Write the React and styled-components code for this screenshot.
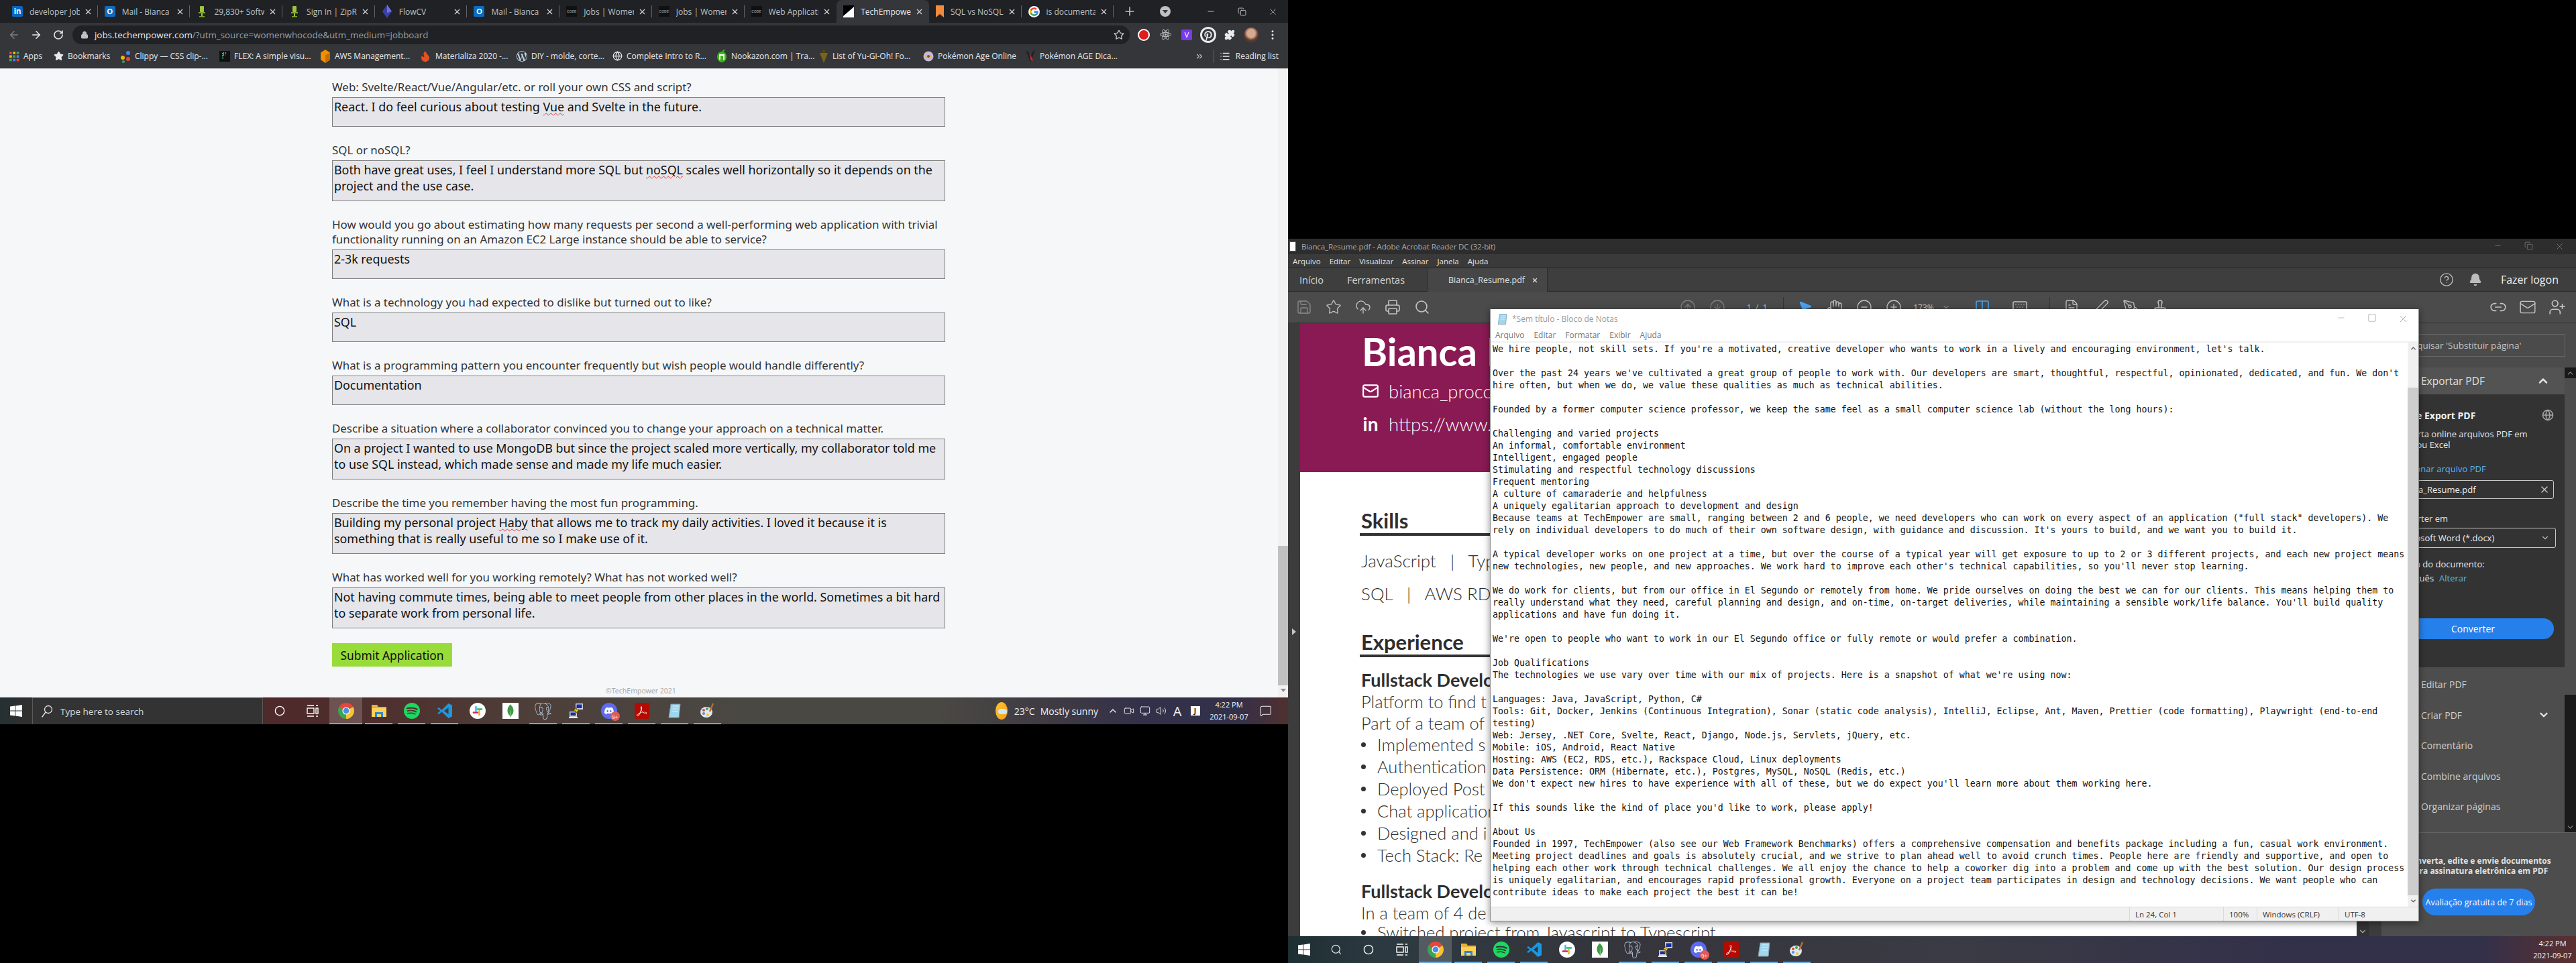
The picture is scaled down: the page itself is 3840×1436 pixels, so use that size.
import React from "react";
import styled, { createGlobalStyle } from "styled-components";
import {
  ArrowLeft, ArrowRight, RotateCw, Lock, Star, Plus, Minus, Square, X, Copy, Puzzle, EllipsisVertical,
  ChevronDown, ChevronUp, ChevronsRight, List, Save, CloudUpload, Printer, Search, CircleArrowUp, CircleArrowDown,
  MousePointer2, Hand, CircleMinus, CirclePlus, Columns2, Keyboard, FileText, PenLine, PenTool, Stamp,
  CircleHelp, Bell, Link2, Mail, UserPlus, Globe, Video, Monitor, Volume2, MessageSquare, Circle, Flame,
} from "lucide-react";
import { SiSpotify, SiMongodb, SiPostgresql, SiDiscord, SiAdobeacrobatreader, SiPinterest, SiReact, SiWordpress } from "react-icons/si";

const UI = `"Open Sans", "Noto Sans", sans-serif`;

const Global = createGlobalStyle`
  html, body { margin: 0; padding: 0; background: #000; overflow: hidden; }
  * { box-sizing: border-box; }
`;

const Desktop = styled.div`
  width: 3840px; height: 1436px; background: #000; display: flex; font-family: ${UI};
`;
const Screen = styled.div`
  position: relative; width: 1920px; height: 1080px; display: flex; flex-direction: column; overflow: hidden;
  align-self: ${(p) => (p.$bottom ? "flex-end" : "flex-start")};
`;

/* ---------- Chrome ---------- */
const TabStrip = styled.div`
  height: 34px; background: #202124; display: flex; align-items: stretch; padding-left: 8px; flex: none;
`;
const Tab = styled.div`
  position: relative; width: 137.7px; display: flex; align-items: center; padding: 0 8px 0 10px; flex: none;
  background: ${(p) => (p.$active ? "#35363a" : "transparent")};
  border-radius: 8px 8px 0 0;
  color: ${(p) => (p.$active ? "#e8eaed" : "#bdc1c6")};
  ${(p) => p.$sep && `&::after { content: ""; position: absolute; right: 0; top: 8px; height: 18px; width: 1px; background: #5f6368; }`}
`;
const TabTitle = styled.span`
  flex: 1; margin-left: 10px; font-size: 12px; white-space: nowrap; overflow: hidden; min-width: 0;
`;
const TabClose = styled.span`
  display: flex; margin-left: 6px; color: #dadce0;
`;
const NewTab = styled.div`
  display: flex; align-items: center; margin-left: 14px; color: #bdc1c6;
`;
const Fill = styled.div`flex: 1;`;
const StripEnd = styled.div`
  display: flex; align-items: center; color: #dadce0;
`;
const Profile = styled.div`
  width: 16px; height: 16px; border-radius: 50%; background: #bdc1c6; margin-right: 37px; position: relative;
  &::after { content: ""; position: absolute; left: 4px; top: 6px; border: 4px solid transparent; border-top: 5px solid #35363a; border-bottom: 0; }
`;
const WinBtn = styled.div`
  width: 46px; display: flex; justify-content: center; color: ${(p) => p.$c || "#dadce0"};
`;
const Toolbar = styled.div`
  height: 35px; background: #35363a; display: flex; align-items: center; padding-left: 4px; flex: none;
`;
const NavBtn = styled.div`
  width: 33px; display: flex; justify-content: center; color: ${(p) => (p.$off ? "#7d7f83" : "#e8eaed")};
`;
const Omnibox = styled.div`
  margin-left: 5px; width: 1576px; height: 28px; border-radius: 14px; background: #202124;
  display: flex; align-items: center; padding: 0 8px 0 12px; font-size: 13.35px; color: #9aa0a6; white-space: nowrap; flex: none;
`;
const Host = styled.span`color: #e8eaed;`;
const UrlText = styled.span`margin-left: 9px;`;
const OmniStar = styled.div`margin-left: auto; display: flex; color: #c4c7ca;`;
const Exts = styled.div`display: flex; align-items: center; padding-left: 5px;`;
const Ext = styled.div`width: 32px; display: flex; justify-content: center; align-items: center; color: ${(p) => p.$c || "#e8eaed"};`;
const Stop = styled.span`
  width: 18px; height: 18px; border-radius: 50%; background: #e21c1c; border: 2px solid #fff; display: block;
`;
const VueBox = styled.span`
  width: 16px; height: 16px; background: #7c3aed; border-radius: 2px; color: #fff; font-size: 11px; display: flex; align-items: center; justify-content: center;
`;
const PinRing = styled.span`
  width: 24px; height: 24px; border-radius: 50%; background: #e8eaed; display: flex; align-items: center; justify-content: center; color: #35363a;
`;
const Avatar = styled.span`
  width: 22px; height: 22px; border-radius: 50%; background: radial-gradient(circle at 50% 40%, #d7a98f 0 34%, #5a3a2c 60%); display: block;
`;
const Bookmarks = styled.div`
  height: 33px; padding-bottom: 3px; background: #35363a; border-bottom: 1px solid #202124; display: flex; align-items: center; padding-left: 13px; flex: none;
`;
const Mark = styled.div`
  width: ${(p) => p.$w}px; display: flex; align-items: center; gap: 6px; font-size: 12px; color: #e8eaed; white-space: nowrap; flex: none; overflow: hidden;
`;
const MarkEnd = styled.div`
  margin-left: auto; display: flex; align-items: center; gap: 8px; padding-right: 14px; font-size: 12px; color: #e8eaed;
`;
const MarkSep = styled.span`width: 1px; height: 20px; background: #5f6368;`;
const MarkMore = styled.span`display: flex; color: #c4c7ca; margin-right: 6px;`;

/* ---------- Form page ---------- */
const PageArea = styled.div`
  flex: 1; display: flex; background: #f6f7f9; min-height: 0;
`;
const FormPane = styled.div`
  flex: 1; position: relative; padding: 17px 0 0 495px; min-width: 0;
`;
const Field = styled.div`
  width: 914px; margin-bottom: 24px; font-family: "Noto Sans", sans-serif;
`;
const Question = styled.div`
  font-size: 16.9px; line-height: 22px; color: #333; margin-bottom: 4px; white-space: nowrap;
`;
const Answer = styled.div`
  height: ${(p) => p.$h}px; background: #e6e6ea; border: 1px solid #7f7f7f; padding: 2px 2px; font-size: 17.85px; line-height: 23.5px; color: #111; white-space: nowrap;
`;
const Typo = styled.span`
  text-decoration: underline wavy #e0302a 1px; text-underline-offset: 2px;
`;
const SubmitBtn = styled.div`
  width: 179px; height: 35px; margin-top: -2px; background: #98dc3a; display: flex; align-items: center; justify-content: center;
  font-family: "Noto Sans", sans-serif; font-size: 17.4px; color: #111;
`;
const Copyright = styled.div`
  position: absolute; left: 903px; top: 921px; font-size: 10.5px; color: #a9a9a9; font-family: "Noto Sans", sans-serif; white-space: nowrap;
`;
const PageScroll = styled.div`
  width: 15px; background: #f1f1f1; display: flex; flex-direction: column; padding-top: 712px;
`;
const PageThumb = styled.div`
  height: 208px; background: #c1c1c1;
`;
const ArrowDownGlyph = styled.div`
  margin: 5px auto 0; border: 4px solid transparent; border-top: 5px solid #8b8b8b; border-bottom: 0; width: 0;
`;

/* ---------- Taskbar ---------- */
const Taskbar = styled.div`
  height: 40px; flex: none; display: flex; align-items: stretch; position: relative; color: #fff;
  background: ${(p) =>
    p.$right
      ? "linear-gradient(90deg,#1d2f33 0,#2c3940 130px,#36353c 500px,#3a3b44 1000px,#33304a 1500px,#33304a 1780px,#5a3030 1920px)"
      : "linear-gradient(90deg,#253032 0,#31302e 48px,#4e2a2a 400px,#4e2d2b 520px,#4d3f3a 800px,#4a4843 1100px,#4a4843 1400px,#3d3844 1600px,#33304a 1700px,#33304a 1840px,#503030 1920px)"};
`;
const StartBtn = styled.div`
  width: 48px; display: flex; align-items: center; justify-content: center; flex: none;
`;
const SearchBox = styled.div`
  width: 344px; flex: none; background: #333; border: 1px solid #5a5a5a; border-bottom: 0; display: flex; align-items: center; gap: 11px; padding-left: 12px;
  font-size: 13.5px; color: #d8d8d8;
`;
const Tile = styled.div`
  width: ${(p) => p.$w || 49}px; flex: none; position: relative; display: flex; align-items: center; justify-content: center;
  background: ${(p) => (p.$active ? "rgba(255,255,255,.18)" : "transparent")};
  ${(p) => p.$open && `&::after { content: ""; position: absolute; bottom: 0; left: ${p.$active ? 0 : 4}px; right: ${p.$active ? 0 : 4}px; height: 2px; background: #67abe0; }`}
`;
const Tray = styled.div`
  margin-left: auto; display: flex; align-items: center; color: #f0f0f0; font-size: 14px; padding-right: ${(p) => p.$pr}px;
`;
const Weather = styled.div`display: flex; align-items: center; gap: 8px; margin-right: 10px;`;
const Sunny = styled.span`
  width: 18px; height: 26px; border-radius: 50%; background: linear-gradient(120deg,#ffc72e,#f59d14); position: relative; display: block; margin-right: 2px;
  &::after { content: ""; position: absolute; left: 4px; top: 10px; width: 13px; height: 8px; border-radius: 4px; background: #cfe6f5; }
`;
const TrayIcon = styled.div`width: 24px; display: flex; justify-content: center; align-items: center; font-size: 20px;`;
const JBox = styled.span`
  width: 14px; height: 14px; background: #fff; color: #111; font-size: 10px; font-weight: 700; display: flex; align-items: center; justify-content: center; margin-left: 5px;
`;
const Clock = styled.div`
  width: 62px; margin-left: ${(p) => p.$ml || 0}px; text-align: center; font-size: 11px; line-height: 18px; color: #f4f4f4; white-space: nowrap;
`;
const Notify = styled.div`width: 48px; display: flex; justify-content: center; align-items: center;`;

/* ---------- Acrobat ---------- */
const Acrobat = styled.div`flex: 1; display: flex; flex-direction: column; min-height: 0; background: #4a4a4a; color: #ddd;`;
const AcTitle = styled.div`
  height: 23px; background: #2d2d2d; display: flex; align-items: center; padding-left: 2px; font-size: 11.6px; letter-spacing: -0.15px; color: #a8a8a8; flex: none;
`;
const PdfBadge = styled.span`
  width: 10px; height: 15px; background: #fff; border: 1px solid #d61f1f; color: #d61f1f; display: block; margin-right: 8px; margin-left: 0;
`;
const AcWin = styled.div`margin-left: auto; display: flex; color: #888; padding-right: 2px;`;
const AcMenu = styled.div`
  height: 21px; background: #3a3a3a; border-bottom: 1px solid #222; display: flex; align-items: center; gap: 13px; padding-left: 7px; font-size: 11.5px; color: #e2e2e2; flex: none;
`;
const AcTabs = styled.div`
  height: 35px; background: #3e3e3e; border-bottom: 1px solid #2b2b2b; display: flex; align-items: stretch; flex: none;
`;
const AcNav = styled.div`
  width: 207px; display: flex; align-items: center; gap: 35px; padding-left: 17px; font-size: 14.5px; color: #d6d6d6;
`;
const AcDocTab = styled.div`
  width: 180px; background: #464646; border-left: 1px solid #2b2b2b; border-right: 1px solid #2b2b2b; display: flex; align-items: center; padding-left: 31px; font-size: 12.5px; color: #e0e0e0; gap: 10px;
  margin-bottom: -1px; white-space: nowrap;
`;
const AcRight = styled.div`
  margin-left: auto; display: flex; align-items: center; gap: 22px; padding-right: 26px; color: #bcbcbc; font-size: 16px;
`;
const Logon = styled.span`color: #f0f0f0; margin-left: 6px;`;
const AcTools = styled.div`
  height: 47px; background: #4b4b4b; border-bottom: 1px solid #333; display: flex; align-items: center; padding-left: 2px; padding-right: 6px; flex: none;
`;
const Tool = styled.div`
  width: ${(p) => p.$w || 44}px; display: flex; justify-content: center; align-items: center; color: ${(p) => p.$c || "#c4c4c4"}; flex: none; font-size: 12px;
  margin-left: ${(p) => p.$ml || 0}px;
`;
const ToolSep = styled.span`width: 1px; height: 30px; background: #333; margin: 0 10px;`;
const AcBody = styled.div`flex: 1; display: flex; min-height: 0;`;
const Rail = styled.div`
  width: 18px; background: #3c3c3c; display: flex; align-items: center; justify-content: center; flex: none;
  &::after { content: ""; border: 5px solid transparent; border-left: 6px solid #c4c4c4; border-right: 0; position: relative; top: 3px; }
`;
const PdfPage = styled.div`
  flex: 1; min-width: 0; background: #fff; overflow: hidden; color: #2e2e2e; font-family: Lato, "Open Sans", sans-serif;
`;
const PdfHead = styled.div`
  height: 222px; background: #8a1a53; color: #fff; padding: 8px 0 0 92px;
`;
const PdfName = styled.div`font-size: 58px; line-height: 68px; font-weight: 700; white-space: nowrap;`;
const PdfLink = styled.div`
  margin-top: ${(p) => p.$mt}px; height: 34px; display: flex; align-items: center; gap: 14px; font-size: 27.5px; font-weight: 300; white-space: nowrap;
`;
const PdfLinkIcon = styled.span`width: 26px; display: flex; justify-content: center; font-weight: 700; font-size: 28px;`;
const PdfBody = styled.div`padding: 53px 0 0 89px;`;
const SectionTitle = styled.div`
  font-size: 31px; line-height: 38px; font-weight: 700; border-bottom: 4px solid #333; padding-left: 2px; margin-top: ${(p) => p.$mt || 0}px; white-space: nowrap;
`;
const SkillLine = styled.div`
  font-size: 26px; line-height: 32px; font-weight: 300; padding-left: 2px; margin-top: ${(p) => p.$mt}px; white-space: pre;
`;
const JobTitle = styled.div`
  font-size: 27px; line-height: 32px; font-weight: 700; padding-left: 2px; margin-top: ${(p) => p.$mt}px; white-space: nowrap;
`;
const JobLine = styled.div`
  font-size: 25.5px; line-height: 32px; font-weight: 300; padding-left: 2px; white-space: nowrap;
`;
const Bullet = styled.div`
  font-size: 25.5px; line-height: 33px; font-weight: 300; padding-left: 26px; position: relative; white-space: nowrap; margin-top: ${(p) => p.$mt || 0}px;
  &::before { content: ""; position: absolute; left: 2px; top: 13px; width: 7px; height: 7px; border-radius: 50%; background: #333; }
`;
const DocScroll = styled.div`
  width: 18px; background: #333; flex: none; display: flex; align-items: flex-end; justify-content: center; color: #aaa;
`;
const DocGap = styled.div`width: 19px; background: #3c3c3c; flex: none;`;
const Panel = styled.div`width: 290px; flex: none; display: flex; flex-direction: column; background: #4b4b4b;`;
const PanelSearch = styled.div`height: 66px; padding: 16px 16px 0; flex: none;`;
const SearchField = styled.div`
  height: 34px; border: 1px solid #666; padding-left: 14px; display: flex; align-items: center; font-size: 13.5px; color: #c4c4c4; white-space: nowrap;
`;
const PanelMain = styled.div`height: 693px; display: flex; flex: none;`;
const PanelCol = styled.div`flex: 1; min-width: 0; display: flex; flex-direction: column;`;
const ExportHead = styled.div`
  height: 40px; background: #535353; padding: 0 22px 0 59px; display: flex; align-items: center; justify-content: space-between; font-size: 15.5px; color: #e0e0e0; flex: none;
`;
const ExportBody = styled.div`
  height: 407px; background: #333; padding: 20px 16px 0; flex: none; font-size: 13px; color: #e8e8e8;
`;
const ExportTitle = styled.div`
  height: 22px; display: flex; align-items: center; justify-content: space-between; font-weight: 700; font-size: 14px; color: #f0f0f0;
`;
const PLine = styled.div`
  line-height: 16px; margin-top: ${(p) => p.$mt || 0}px; color: ${(p) => p.$c || "inherit"}; white-space: nowrap; display: flex; gap: ${(p) => p.$gap || 0}px;
`;
const Blue = styled.span`color: #5ab4f0;`;
const InputBox = styled.div`
  height: ${(p) => p.$h}px; margin-top: ${(p) => p.$mt}px; margin-right: ${(p) => p.$mr || 0}px; border: 1px solid #c8c8c8; border-radius: 3px; display: flex; align-items: center; justify-content: space-between;
  padding: 0 ${(p) => p.$pr}px 0 ${(p) => p.$pl}px; white-space: nowrap; color: #ededed;
`;
const ConvertBtn = styled.div`
  height: 31px; margin-top: 52px; border-radius: 16px; background: #2680eb; color: #fff; font-size: 14px; display: flex; align-items: center; justify-content: center;
`;
const ToolList = styled.div`flex: 1; background: #4d4d4d; padding-top: 3px;`;
const ToolItem = styled.div`
  height: 45.5px; padding: 0 22px 0 59px; display: flex; align-items: center; justify-content: space-between; font-size: 14px; color: #cfcfcf;
`;
const PanelBar = styled.div`width: 17px; background: #1a1a1a; flex: none; display: flex; flex-direction: column;`;
const BarArrow = styled.div`height: 16px; display: flex; justify-content: center; align-items: center; color: #8a8a8a; flex: none;`;
const BarThumb = styled.div`height: 472px; background: #4d4d4d; flex: none;`;
const PanelFoot = styled.div`
  flex: 1; border-top: 1px solid #646464; background: #4d4d4d; padding-top: 34px; text-align: center; font-size: 12px; font-weight: 700; line-height: 15px; color: #e0e0e0;
`;
const TrialBtn = styled.div`
  width: 168px; height: 40px; margin: 19px auto 0; border-radius: 20px; background: #2680eb; color: #fff; font-size: 12.5px; font-weight: 400; display: flex; align-items: center; justify-content: center; white-space: nowrap;
`;

/* ---------- Notepad ---------- */
const Notepad = styled.div`
  position: absolute; left: 301px; top: 105px; width: 1385px; height: 913px; background: #fff; border: 1px solid #8a8a8a; border-top: 0;
  box-shadow: 0 2px 10px rgba(0,0,0,.45); display: flex; flex-direction: column; font-family: ${UI};
`;
const NpTitle = styled.div`
  height: 29px; display: flex; align-items: center; padding-left: 9px; font-size: 12px; color: #9a9a9a; flex: none; gap: 5px;
`;
const NpWin = styled.div`margin-left: auto; display: flex; color: #8d8d8d;`;
const NpMenu = styled.div`
  height: 18px; display: flex; align-items: center; gap: 14px; padding-left: 7px; font-size: 12px; color: #777; flex: none;
`;
const NpEditWrap = styled.div`
  flex: 1; min-height: 0; display: flex; border-top: 2px solid #f0f0f0; margin-top: 1px;
`;
const NpEdit = styled.div`
  flex: 1; min-width: 0; padding: 1px 0 0 3px; overflow: hidden; white-space: pre; font-family: "DejaVu Sans Mono", "Liberation Mono", monospace; font-size: 13.29px; line-height: 18px; color: #111;
`;
const NpBar = styled.div`width: 16px; background: #f0f0f0; flex: none; display: flex; flex-direction: column;`;
const NpArrow = styled.div`height: 17px; display: flex; justify-content: center; align-items: center; color: #505050; flex: none;`;
const NpThumbSpace = styled.div`height: 50px; flex: none;`;
const NpThumb = styled.div`flex: 1; background: #cdcdcd;`;
const NpStatus = styled.div`
  height: 21px; background: #f0f0f0; border-top: 1px solid #d9d9d9; display: flex; justify-content: flex-end; font-size: 11.5px; color: #333; flex: none;
`;
const NpCell = styled.div`
  width: ${(p) => p.$w}px; border-left: 1px solid #d9d9d9; padding-left: 8px; display: flex; align-items: center; white-space: nowrap;
`;

/* ---------- icons ---------- */
const Fav = styled.span`
  width: 16px; height: 16px; flex: none; display: flex; align-items: center; justify-content: center; overflow: hidden;
  font-family: "Liberation Sans", sans-serif; font-weight: 700;
  background: ${(p) => p.$bg || "transparent"}; color: ${(p) => p.$c || "#fff"}; font-size: ${(p) => p.$s || 11}px; border-radius: ${(p) => p.$r || 0}px;
`;
const TileBadge = styled(Fav)`
  width: ${(p) => p.$sz || 24}px; height: 24px;
`;
const Zip = () => (
  <svg width="16" height="18" viewBox="0 0 16 18"><rect x="5" y="1" width="6" height="9" rx="1" fill="#9bc53d" /><rect x="3" y="10" width="10" height="2" fill="#7ea52c" /><rect x="7" y="12" width="2" height="4" fill="#9bc53d" /><rect x="4" y="16" width="8" height="1.5" fill="#7ea52c" /></svg>
);
const Flow = () => (
  <svg width="16" height="20" viewBox="0 0 16 20"><path d="M8 0 15 10 8 20 1 10Z" fill="#3b3fa8" /><path d="M8 0 15 10 8 12Z" fill="#6d72d8" /></svg>
);
const TE = () => (
  <svg width="16" height="18" viewBox="0 0 16 18"><rect width="16" height="18" fill="#fff" /><path d="M0 16 16 2V0H0Z" fill="#000" /></svg>
);
const BookMark = () => (
  <svg width="12" height="18" viewBox="0 0 12 18"><path d="M0 0H12V18L6 13 0 18Z" fill="#f08a3c" /></svg>
);
const G = () => (
  <svg width="17" height="17" viewBox="0 0 24 24"><circle cx="12" cy="12" r="12" fill="#fff" /><path d="M21 12.3c0-.7-.1-1.300-.2-1.900H12v3.600h5c-.2 1.200-.9 2.100-1.900 2.800v2.300h3c1.800-1.600 2.900-4 2.900-6.800z" fill="#4285F4" /><path d="M12 21c2.500 0 4.500-.8 6.100-2.200l-3-2.300c-.8.600-1.900.9-3.100.9-2.400 0-4.400-1.600-5.100-3.800H3.800v2.400C5.300 19 8.400 21 12 21z" fill="#34A853" /><path d="M6.900 13.600c-.4-1.100-.4-2.200 0-3.300V8H3.800c-1.100 2.300-1.100 5.500 0 8z" fill="#FBBC05" /><path d="M12 6.600c1.300 0 2.500.5 3.500 1.400l2.600-2.600C16.500 3.900 14.400 3 12 3 8.400 3 5.300 5 3.800 8l3.100 2.400C7.600 8.200 9.600 6.600 12 6.600z" fill="#EA4335" /></svg>
);
const favicon = (k) => {
  switch (k) {
    case "in": return <Fav $bg="#0a66c2" $r={2} $s={12}>in</Fav>;
    case "ol": return <Fav $bg="#0f6cbd" $r={2} $s={11}>O</Fav>;
    case "zip": return <Zip />;
    case "flow": return <Flow />;
    case "code": return <Fav $c="#8a8a8a" $bg="#111" $s={5}>CODE</Fav>;
    case "te": return <TE />;
    case "sql": return <BookMark />;
    default: return <G />;
  }
};
const AppsGrid = () => (
  <svg width="16" height="16" viewBox="0 0 15 15">
    {[0, 1, 2].flatMap((r) => [0, 1, 2].map((c) => (
      <rect key={r + "" + c} x={1 + c * 5} y={1 + r * 5} width="3.400" height="3.400" fill={["#ea4335", "#fbbc05", "#34a853", "#4285f4"][(r + c) % 4]} />
    )))}
  </svg>
);
const Clippy = () => (
  <svg width="16" height="22" viewBox="0 0 16 22"><circle cx="4" cy="13" r="3" fill="#f4b400" /><circle cx="12" cy="6" r="3" fill="#4285f4" /><circle cx="12" cy="15" r="3" fill="#ea4335" /><circle cx="5" cy="19" r="2" fill="#34a853" /></svg>
);
const FlexIco = () => (
  <svg width="16" height="16" viewBox="0 0 16 16"><rect width="16" height="16" fill="#111" /><path d="M5 3h6M5 6h4M5 3v9" stroke="#3fe0a8" strokeWidth="1.500" strokeDasharray="2 1.200" /></svg>
);
const Aws = () => (
  <svg width="16" height="20" viewBox="0 0 16 20"><path d="M8 0 15 4.500V15L8 20 1 15V4.500Z" fill="#f29100" /><path d="M8 8 15 4.500V15L8 20Z" fill="#c46f00" /></svg>
);
const Drop = () => <Flame size={18} color="#e8501f" fill="#e8501f" />;
const GlobeWhite = () => <Globe size={15} color="#e8eaed" />;
const Nook = () => (
  <svg width="16" height="20" viewBox="0 0 16 20"><path d="M8 3c5 0 7 4 7 8s-3 8-7 8-7-4-7-8 2-8 7-8z" fill="#3cb21a" /><path d="M5 15V8l6 0v7" stroke="#fff" strokeWidth="1.800" fill="none" /><path d="M9 3l3-3" stroke="#3cb21a" strokeWidth="2" /></svg>
);
const Yugi = () => (
  <svg width="14" height="20" viewBox="0 0 14 20"><path d="M1 5h12L7 20Z" fill="#7a6318" /><path d="M5 0h4v5H5Z" fill="#54440f" /></svg>
);
const Poke = () => (
  <svg width="16" height="18" viewBox="0 0 16 18"><circle cx="8" cy="9" r="7.500" fill="#c9b7d8" /><path d="M3 7h10v4H3z" fill="#e3c22c" /><circle cx="8" cy="9" r="2" fill="#7c4d27" /></svg>
);
const PokeV = () => (
  <svg width="16" height="20" viewBox="0 0 16 20"><path d="M1 1l7 18 7-18-4 2-3 9-3-9z" fill="#222" /><path d="M8 7l4 10-4-2z" fill="#d62a2a" /></svg>
);
const Win = ({ s = 18 }) => (
  <svg width={s} height={s} viewBox="0 0 18 18" fill="#fff"><path d="M0 2.600 7.400 1.500V8.500H0ZM8.300 1.400 18 0V8.500H8.300ZM0 9.400H7.400V16.500L0 15.400ZM8.300 9.400H18V18L8.300 16.600Z" /></svg>
);
const ChromeIco = () => (
  <svg width="24" height="24" viewBox="0 0 24 24"><path d="M12 12 22.390 6A12 12 0 0 0 1.610 6Z" fill="#e2483b" /><path d="M12 12 12 24A12 12 0 0 0 22.390 6Z" fill="#f6c436" /><path d="M12 12 1.610 6A12 12 0 0 0 12 24Z" fill="#3da453" /><circle cx="12" cy="12" r="5.600" fill="#fff" /><circle cx="12" cy="12" r="4.400" fill="#4a8fe7" /></svg>
);
const FolderIco = () => (
  <svg width="24" height="24" viewBox="0 0 24 24"><path d="M1 3h8l2 3h12v15H1Z" fill="#e8b23a" /><rect x="1" y="8" width="22" height="13" fill="#fbd35a" /><rect x="6" y="14" width="12" height="7" fill="#2f86d6" /><rect x="9" y="17" width="6" height="4" fill="#fbd35a" /></svg>
);
const VscIco = () => (
  <svg width="24" height="24" viewBox="0 0 24 24"><path fillRule="evenodd" d="M17.500 1 7.500 10.500 3 7 1 8.500 5.500 12 1 15.500 3 17 7.500 13.500 17.500 23 23 20.500V3.500ZM17.500 7V17L11 12Z" fill="#1d97e0" /></svg>
);
const SlackIco = () => (
  <svg width="24" height="24" viewBox="0 0 24 24"><circle cx="12" cy="12" r="12" fill="#fff" /><g strokeWidth="2.600" strokeLinecap="round"><path d="M9.500 6v6" stroke="#36c5f0" /><path d="M6 14.500h6" stroke="#e01e5a" /><path d="M14.500 18v-6" stroke="#ecb22e" /><path d="M18 9.500h-6" stroke="#2eb67d" /></g></svg>
);
const MongoIco = () => (
  <TileBadge $bg="#fff"><SiMongodb size={20} color="#3a9a3e" /></TileBadge>
);
const PuttyIco = () => (
  <svg width="24" height="24" viewBox="0 0 24 24"><rect x="11" y="1" width="11" height="9" fill="#cfd3dc" /><rect x="12.500" y="2.500" width="8" height="5.500" fill="#1a2ca5" /><rect x="2" y="13" width="11" height="8" fill="#cfd3dc" /><rect x="3.500" y="14.500" width="8" height="4.500" fill="#1a2ca5" /><rect x="1" y="21" width="13" height="2" fill="#ececec" /><path d="M14 5 8 12h4l-3 7 7-9h-4z" fill="#ffd61f" stroke="#222" strokeWidth=".6" /></svg>
);
const DiscordWrap = styled.span`position: relative; display: flex;`;
const DiscordIco = () => (
  <TileBadge $bg="#5c6bf2" $r={12}><SiDiscord size={14} color="#fff" /></TileBadge>
);
const DiscordBadge = styled.span`
  position: absolute; left: 50%; top: 50%; margin-left: 2px; margin-top: 1px; width: 14px; height: 14px; border-radius: 50%; background: #e35b58; color: #fff; font-size: 8px; display: flex; align-items: center; justify-content: center;
`;
const AcrobatIco = () => (
  <TileBadge $bg="#b30b00" $r={3} $sz={22}><SiAdobeacrobatreader size={15} color="#fff" /></TileBadge>
);
const NotepadIco = ({ s = 24 }) => (
  <svg width={s} height={s} viewBox="0 0 24 24"><path d="M6 2 20 2 18 22 3 22Z" fill="#9ed6ee" stroke="#7f99a8" /><path d="M9 5 18 5M8.500 9 17.500 9M8 13 17 13" stroke="#d9f1fb" /></svg>
);
const PaintIco = () => (
  <svg width="24" height="24" viewBox="0 0 24 24"><ellipse cx="10" cy="14" rx="9" ry="8" fill="#dfe7ef" /><circle cx="6" cy="11" r="2" fill="#e2483b" /><circle cx="11" cy="9" r="2" fill="#3da453" /><circle cx="6" cy="16" r="2" fill="#4a8fe7" /><circle cx="12" cy="18" r="2" fill="#f6c436" /><path d="M20 1 15 13" stroke="#b3702f" strokeWidth="2.500" /></svg>
);
const SearchGlass = () => (
  <svg width="18" height="20" viewBox="0 0 18 20" fill="none" stroke="#e8e8e8" strokeWidth="1.300"><circle cx="11" cy="7" r="5.500" /><path d="M7 11 1.500 18.500" /></svg>
);
const TaskView = () => (
  <svg width="18" height="18" viewBox="0 0 18 18" fill="none" stroke="#fff" strokeWidth="1.400"><rect x="1" y="5" width="10" height="8" /><path d="M1 1h10M1 17h10M14 1h3M14 17h3" /><rect x="14" y="5" width="3" height="8" /></svg>
);

/* ---------- data ---------- */
const tabs = [
  ["in", "developer Jobs", 1], ["ol", "Mail - Bianca P", 1], ["zip", "29,830+ Softw", 1], ["zip", "Sign In | ZipRe", 1],
  ["flow", "FlowCV", 1], ["ol", "Mail - Bianca P", 1], ["code", "Jobs | Women", 1], ["code", "Jobs | Women", 1],
  ["code", "Web Applicati", 0], ["te", "TechEmpower", 0, true], ["sql", "SQL vs NoSQL", 1], ["g", "is documentat", 1],
];
const marks = [
  [<AppsGrid />, "Apps", 67], [<Star size={15} fill="#e8eaed" color="#e8eaed" />, "Bookmarks", 99], [<Clippy />, "Clippy — CSS clip-...", 148],
  [<FlexIco />, "FLEX: A simple visu...", 150], [<Aws />, "AWS Management...", 148], [<Drop />, "Materializa 2020 -...", 145],
  [<SiWordpress size={16} color="#bcd5e6" />, "DIY - molde, corte...", 143], [<GlobeWhite />, "Complete Intro to R...", 155], [<Nook />, "Nookazon.com | Tra...", 153],
  [<Yugi />, "List of Yu-Gi-Oh! Fo...", 155], [<Poke />, "Pokémon Age Online", 152], [<PokeV />, "Pokémon AGE Dica...", 150],
];
const fields = [
  { q: ["Web: Svelte/React/Vue/Angular/etc. or roll your own CSS and script?"], h: 44, a: <>React. I do feel curious about testing <Typo>Vue</Typo> and Svelte in the future.</> },
  { q: ["SQL or noSQL?"], h: 61, a: <>Both have great uses, I feel I understand more SQL but <Typo>noSQL</Typo> scales well horizontally so it depends on the<br />project and the use case.</> },
  { q: ["How would you go about estimating how many requests per second a well-performing web application with trivial", "functionality running on an Amazon EC2 Large instance should be able to service?"], h: 44, a: "2-3k requests" },
  { q: ["What is a technology you had expected to dislike but turned out to like?"], h: 44, a: "SQL" },
  { q: ["What is a programming pattern you encounter frequently but wish people would handle differently?"], h: 44, a: "Documentation" },
  { q: ["Describe a situation where a collaborator convinced you to change your approach on a technical matter."], h: 61, a: <>On a project I wanted to use MongoDB but since the project scaled more vertically, my collaborator told me<br />to use SQL instead, which made sense and made my life much easier.</> },
  { q: ["Describe the time you remember having the most fun programming."], h: 61, a: <>Building my personal project <Typo>Haby</Typo> that allows me to track my daily activities. I loved it because it is<br />something that is really useful to me so I make use of it.</> },
  { q: ["What has worked well for you working remotely? What has not worked well?"], h: 61, a: <>Not having commute times, being able to meet people from other places in the world. Sometimes a bit hard<br />to separate work from personal life.</> },
];
const taskTiles = [
  [<ChromeIco />, true, true], [<FolderIco />, true], [<SiSpotify size={24} color="#1ed760" />, true], [<VscIco />, true], [<SlackIco />], [<MongoIco />],
  [<SiPostgresql size={25} color="#b4c6d8" />, true], [<PuttyIco />, true],
  [<DiscordWrap><DiscordIco /><DiscordBadge>9+</DiscordBadge></DiscordWrap>, true], [<AcrobatIco />, true], [<NotepadIco />, true], [<PaintIco />, true],
];
const noteText = `We hire people, not skill sets. If you're a motivated, creative developer who wants to work in a lively and encouraging environment, let's talk.

Over the past 24 years we've cultivated a great group of people to work with. Our developers are smart, thoughtful, respectful, opinionated, dedicated, and fun. We don't
hire often, but when we do, we value these qualities as much as technical abilities.

Founded by a former computer science professor, we keep the same feel as a small computer science lab (without the long hours):

Challenging and varied projects
An informal, comfortable environment
Intelligent, engaged people
Stimulating and respectful technology discussions
Frequent mentoring
A culture of camaraderie and helpfulness
A uniquely egalitarian approach to development and design
Because teams at TechEmpower are small, ranging between 2 and 6 people, we need developers who can work on every aspect of an application ("full stack" developers). We
rely on individual developers to do much of their own software design, with guidance and discussion. It's yours to build, and we want you to build it.

A typical developer works on one project at a time, but over the course of a typical year will get exposure to up to 2 or 3 different projects, and each new project means
new technologies, new people, and new approaches. We work hard to improve each other's technical capabilities, so you'll never stop learning.

We do work for clients, but from our office in El Segundo or remotely from home. We pride ourselves on doing the best we can for our clients. This means helping them to
really understand what they need, careful planning and design, and on-time, on-target deliveries, while maintaining a sensible work/life balance. You'll build quality
applications and have fun doing it.

We're open to people who want to work in our El Segundo office or fully remote or would prefer a combination.

Job Qualifications
The technologies we use vary over time with our mix of projects. Here is a snapshot of what we're using now:

Languages: Java, JavaScript, Python, C#
Tools: Git, Docker, Jenkins (Continuous Integration), Sonar (static code analysis), IntelliJ, Eclipse, Ant, Maven, Prettier (code formatting), Playwright (end-to-end
testing)
Web: Jersey, .NET Core, Svelte, React, Django, Node.js, Servlets, jQuery, etc.
Mobile: iOS, Android, React Native
Hosting: AWS (EC2, RDS, etc.), Rackspace Cloud, Linux deployments
Data Persistence: ORM (Hibernate, etc.), Postgres, MySQL, NoSQL (Redis, etc.)
We don't expect new hires to have experience with all of these, but we do expect you'll learn more about them working here.

If this sounds like the kind of place you'd like to work, please apply!

About Us
Founded in 1997, TechEmpower (also see our Web Framework Benchmarks) offers a comprehensive compensation and benefits package including a fun, casual work environment.
Meeting project deadlines and goals is absolutely crucial, and we strive to plan ahead well to avoid crunch times. People here are friendly and supportive, and open to
helping each other work through technical challenges. We all enjoy the chance to help a coworker dig into a problem and come up with the best solution. Our design process
is uniquely egalitarian, and encourages rapid professional growth. Everyone on a project team participates in design and technology decisions. We want people who can
contribute ideas to make each project the best it can be!`;

const TaskTiles = () => taskTiles.map(([ico, open, active], i) => (
  <Tile key={i} $open={open} $active={active}>{ico}</Tile>
));

export default function App() {
  return (
    <Desktop>
      <Global />
      <Screen>
        <TabStrip>
          {tabs.map(([ic, t, sep, active], i) => (
            <Tab key={i} $sep={!!sep} $active={active}>
              {favicon(ic)}
              <TabTitle>{t}</TabTitle>
              <TabClose><X size={13} strokeWidth={2} /></TabClose>
            </Tab>
          ))}
          <NewTab><Plus size={20} strokeWidth={2} /></NewTab>
          <Fill />
          <StripEnd>
            <Profile />
            <WinBtn><Minus size={14} strokeWidth={1.5} /></WinBtn>
            <WinBtn><Copy size={13} strokeWidth={1.5} /></WinBtn>
            <WinBtn><X size={15} strokeWidth={1.2} /></WinBtn>
          </StripEnd>
        </TabStrip>
        <Toolbar>
          <NavBtn $off><ArrowLeft size={18} /></NavBtn>
          <NavBtn><ArrowRight size={18} /></NavBtn>
          <NavBtn><RotateCw size={16} strokeWidth={2.4} /></NavBtn>
          <Omnibox>
            <Lock size={12} color="#bdc1c6" fill="#bdc1c6" />
            <UrlText><Host>jobs.techempower.com</Host>/?utm_source=womenwhocode&amp;utm_medium=jobboard</UrlText>
            <OmniStar><Star size={16} /></OmniStar>
          </Omnibox>
          <Exts>
            <Ext><Stop /></Ext>
            <Ext><SiReact size={17} color="#cfd2d6" /></Ext>
            <Ext><VueBox>V</VueBox></Ext>
            <Ext><PinRing><SiPinterest size={18} /></PinRing></Ext>
            <Ext><Puzzle size={16} fill="#e8eaed" /></Ext>
            <Ext><Avatar /></Ext>
            <Ext><EllipsisVertical size={18} /></Ext>
          </Exts>
        </Toolbar>
        <Bookmarks>
          {marks.map(([ic, t, w], i) => (
            <Mark key={i} $w={w}>{ic}{t}</Mark>
          ))}
          <MarkEnd>
            <MarkMore><ChevronsRight size={14} /></MarkMore>
            <MarkSep />
            <List size={16} />
            Reading list
          </MarkEnd>
        </Bookmarks>
        <PageArea>
          <FormPane>
            {fields.map((f, i) => (
              <Field key={i}>
                <Question>{f.q.map((l, j) => <div key={j}>{l}</div>)}</Question>
                <Answer $h={f.h}>{f.a}</Answer>
              </Field>
            ))}
            <SubmitBtn>Submit Application</SubmitBtn>
            <Copyright>©TechEmpower 2021</Copyright>
          </FormPane>
          <PageScroll>
            <PageThumb />
            <ArrowDownGlyph />
          </PageScroll>
        </PageArea>
        <Taskbar>
          <StartBtn><Win /></StartBtn>
          <SearchBox><SearchGlass />Type here to search</SearchBox>
          <Tile $w={49}><Circle size={16} strokeWidth={2} /></Tile>
          <Tile $w={50}><TaskView /></Tile>
          <TaskTiles />
          <Tray $pr={9}>
            <Weather>
              <Sunny />
              <span>23°C</span>
              <span>Mostly sunny</span>
            </Weather>
            <TrayIcon><ChevronUp size={16} /></TrayIcon>
            <TrayIcon><Video size={16} strokeWidth={1.4} /></TrayIcon>
            <TrayIcon><Monitor size={16} strokeWidth={1.4} /></TrayIcon>
            <TrayIcon><Volume2 size={16} strokeWidth={1.4} /></TrayIcon>
            <TrayIcon>A</TrayIcon>
            <TrayIcon><JBox>J</JBox></TrayIcon>
            <Clock $ml={10}>4:22 PM<br />2021-09-07</Clock>
            <Notify><MessageSquare size={18} strokeWidth={1.4} /></Notify>
          </Tray>
        </Taskbar>
      </Screen>

      <Screen $bottom>
        <Acrobat>
          <AcTitle>
            <PdfBadge />
            Bianca_Resume.pdf - Adobe Acrobat Reader DC (32-bit)
            <AcWin>
              <WinBtn $c="#8a8a8a"><Minus size={13} strokeWidth={1.2} /></WinBtn>
              <WinBtn $c="#8a8a8a"><Copy size={13} strokeWidth={1.2} /></WinBtn>
              <WinBtn $c="#8a8a8a"><X size={15} strokeWidth={1.2} /></WinBtn>
            </AcWin>
          </AcTitle>
          <AcMenu>
            <span>Arquivo</span><span>Editar</span><span>Visualizar</span><span>Assinar</span><span>Janela</span><span>Ajuda</span>
          </AcMenu>
          <AcTabs>
            <AcNav><span>Início</span><span>Ferramentas</span></AcNav>
            <AcDocTab>Bianca_Resume.pdf <X size={10} strokeWidth={3} /></AcDocTab>
            <AcRight>
              <CircleHelp size={22} strokeWidth={1.5} />
              <Bell size={20} fill="#bcbcbc" />
              <Logon>Fazer logon</Logon>
            </AcRight>
          </AcTabs>
          <AcTools>
            <Tool $c="#8c8c8c"><Save size={24} strokeWidth={1.3} /></Tool>
            <Tool><Star size={24} strokeWidth={1.3} /></Tool>
            <Tool><CloudUpload size={24} strokeWidth={1.3} /></Tool>
            <Tool><Printer size={24} strokeWidth={1.6} /></Tool>
            <Tool><Search size={24} strokeWidth={1.6} /></Tool>
            <Tool $c="#808080" $ml={352}><CircleArrowUp size={24} strokeWidth={1.3} /></Tool>
            <Tool $c="#808080"><CircleArrowDown size={24} strokeWidth={1.3} /></Tool>
            <Tool $w={58} $ml={8} $c="#bdbdbd">1&nbsp;&nbsp;/&nbsp;&nbsp;1</Tool>
            <ToolSep />
            <Tool $c="#4aa3f0"><MousePointer2 size={22} fill="#4aa3f0" /></Tool>
            <Tool><Hand size={24} strokeWidth={1.3} /></Tool>
            <Tool><CircleMinus size={24} strokeWidth={1.3} /></Tool>
            <Tool><CirclePlus size={24} strokeWidth={1.3} /></Tool>
            <Tool $w={45}>173%</Tool>
            <Tool $w={22}><ChevronDown size={12} /></Tool>
            <Tool $w={44} $ml={21} $c="#4aa3f0"><Columns2 size={24} strokeWidth={1.6} /></Tool>
            <Tool $w={68}><Keyboard size={24} strokeWidth={1.5} /></Tool>
            <ToolSep />
            <Tool $w={44}><FileText size={24} strokeWidth={1.3} /></Tool>
            <Tool><PenLine size={24} strokeWidth={1.3} /></Tool>
            <Tool><PenTool size={24} strokeWidth={1.3} /></Tool>
            <Tool><Stamp size={24} strokeWidth={1.5} /></Tool>
            <Fill />
            <Tool><Link2 size={26} strokeWidth={1.5} /></Tool>
            <Tool><Mail size={26} strokeWidth={1.3} /></Tool>
            <Tool><UserPlus size={26} strokeWidth={1.6} /></Tool>
          </AcTools>
          <AcBody>
            <Rail />
            <PdfPage>
              <PdfHead>
                <PdfName>Bianca Procopio</PdfName>
                <PdfLink $mt={8}><PdfLinkIcon><Mail size={26} /></PdfLinkIcon>bianca_procopio@</PdfLink>
                <PdfLink $mt={15}><PdfLinkIcon>in</PdfLinkIcon>https://www.linkedin.com</PdfLink>
              </PdfHead>
              <PdfBody>
                <SectionTitle>Skills</SectionTitle>
                <SkillLine $mt={21}>JavaScript   |   TypeScript</SkillLine>
                <SkillLine $mt={17}>SQL   |   AWS RDS</SkillLine>
                <SectionTitle $mt={37}>Experience</SectionTitle>
                <JobTitle $mt={18}>Fullstack Developer</JobTitle>
                <JobLine>Platform to find t</JobLine>
                <JobLine>Part of a team of</JobLine>
                <Bullet>Implemented s</Bullet>
                <Bullet>Authentication</Bullet>
                <Bullet>Deployed Post</Bullet>
                <Bullet>Chat application</Bullet>
                <Bullet>Designed and i</Bullet>
                <Bullet>Tech Stack: Re</Bullet>
                <JobTitle $mt={21}>Fullstack Developer</JobTitle>
                <JobLine>In a team of 4 de</JobLine>
                <Bullet $mt={-3}>Switched project from Javascript to Typescript</Bullet>
              </PdfBody>
            </PdfPage>
            <DocScroll><ChevronDown size={14} /></DocScroll>
            <DocGap />
            <Panel>
              <PanelSearch><SearchField>Pesquisar 'Substituir página'</SearchField></PanelSearch>
              <PanelMain>
                <PanelCol>
                  <ExportHead>Exportar PDF<ChevronUp size={20} strokeWidth={3} /></ExportHead>
                  <ExportBody>
                    <ExportTitle>Adobe Export PDF<Globe size={18} color="#a8a8a8" /></ExportTitle>
                    <PLine $mt={9}>Converta online arquivos PDF em</PLine>
                    <PLine>Word ou Excel</PLine>
                    <PLine $mt={20} $c="#5ab4f0">Selecionar arquivo PDF</PLine>
                    <InputBox $h={28} $mt={9} $pl={5} $pr={5}>Bianca_Resume.pdf<X size={16} strokeWidth={2.4} color="#bbb" /></InputBox>
                    <PLine $mt={21}>Converter em</PLine>
                    <InputBox $h={30} $mt={6} $mr={-3} $pl={7} $pr={8}>Microsoft Word (*.docx)<ChevronDown size={14} color="#bbb" /></InputBox>
                    <PLine $mt={16}>Idioma do documento:</PLine>
                    <PLine $mt={5} $gap={8}>Português <Blue>Alterar</Blue></PLine>
                    <ConvertBtn>Converter</ConvertBtn>
                  </ExportBody>
                  <ToolList>
                    <ToolItem>Editar PDF</ToolItem>
                    <ToolItem>Criar PDF<ChevronDown size={18} strokeWidth={3} color="#e8e8e8" /></ToolItem>
                    <ToolItem>Comentário</ToolItem>
                    <ToolItem>Combine arquivos</ToolItem>
                    <ToolItem>Organizar páginas</ToolItem>
                  </ToolList>
                </PanelCol>
                <PanelBar>
                  <BarArrow><ChevronUp size={13} /></BarArrow>
                  <BarThumb />
                  <Fill />
                  <BarArrow><ChevronDown size={13} /></BarArrow>
                </PanelBar>
              </PanelMain>
              <PanelFoot>
                Converta, edite e envie documentos<br />para assinatura eletrônica em PDF
                <TrialBtn>Avaliação gratuita de 7 dias</TrialBtn>
              </PanelFoot>
            </Panel>
          </AcBody>
        </Acrobat>
        <Taskbar $right>
          <StartBtn><Win /></StartBtn>
          <Tile $w={48}><Search size={18} strokeWidth={1.4} /></Tile>
          <Tile $w={48}><Circle size={16} strokeWidth={2} /></Tile>
          <Tile $w={51}><TaskView /></Tile>
          <TaskTiles />
          <Tray $pr={4}>
            <Clock>4:22 PM<br />2021-09-07</Clock>
          </Tray>
        </Taskbar>
        <Notepad>
          <NpTitle>
            <NotepadIco s={18} />
            *Sem título - Bloco de Notas
            <NpWin>
              <WinBtn $c="#8d8d8d"><Minus size={14} strokeWidth={1} /></WinBtn>
              <WinBtn $c="#8d8d8d"><Square size={14} strokeWidth={1} /></WinBtn>
              <WinBtn $c="#8d8d8d"><X size={17} strokeWidth={1} /></WinBtn>
            </NpWin>
          </NpTitle>
          <NpMenu>
            <span>Arquivo</span><span>Editar</span><span>Formatar</span><span>Exibir</span><span>Ajuda</span>
          </NpMenu>
          <NpEditWrap>
            <NpEdit>{noteText}</NpEdit>
            <NpBar>
              <NpArrow><ChevronUp size={11} strokeWidth={3} /></NpArrow>
              <NpThumbSpace />
              <NpThumb />
              <NpArrow><ChevronDown size={11} strokeWidth={3} /></NpArrow>
            </NpBar>
          </NpEditWrap>
          <NpStatus>
            <NpCell $w={140}>Ln 24, Col 1</NpCell>
            <NpCell $w={50}>100%</NpCell>
            <NpCell $w={122}>Windows (CRLF)</NpCell>
            <NpCell $w={119}>UTF-8</NpCell>
          </NpStatus>
        </Notepad>
      </Screen>
    </Desktop>
  );
}
